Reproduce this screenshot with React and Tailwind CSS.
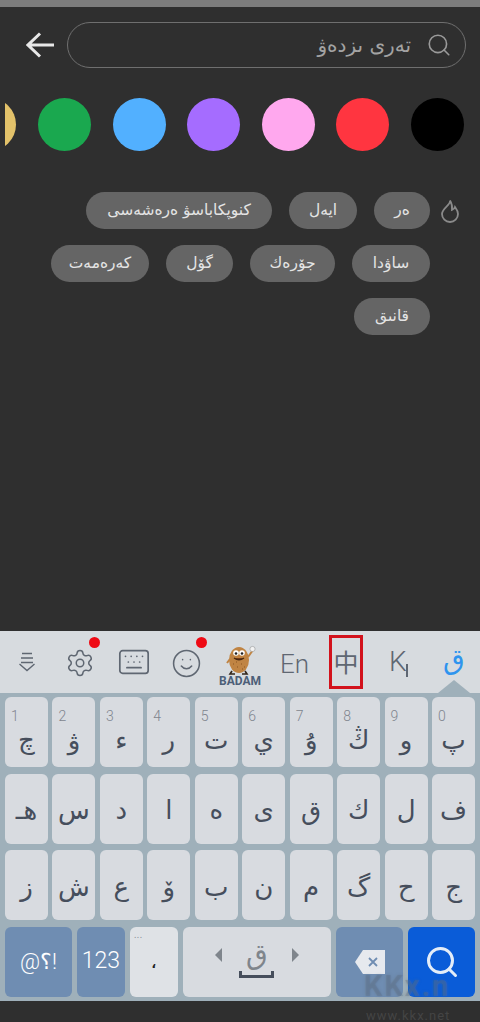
import { Search, Settings, Keyboard, Smile } from "lucide-react";

const arabic = { fontFamily: '"DejaVu Sans", "Noto Sans", sans-serif' };
const latin = { fontFamily: 'Roboto, "Liberation Sans", sans-serif' };

const colors = ["bg-[#e3c26a]", "bg-[#1aa84f]", "bg-[#52b0ff]", "bg-[#a56cff]", "bg-[#ffa8ee]", "bg-[#ff3540]", "bg-black"];

const tagRows = [
  [["كنوپكاباسۋ ەرەشەسى", "w-[186px]"], ["ايەل", "w-[68px]"], ["ەر", "w-[56px]"]],
  [["كەرەمەت", "w-[98px]"], ["گۆل", "w-[67px]"], ["جۆرەك", "w-[85px]"], ["ساۋدا", "w-[78px]"]],
  [["قانىق", "w-[76px]"]],
];

const row1 = [["1", "چ"], ["2", "ۋ"], ["3", "ء"], ["4", "ر"], ["5", "ت"], ["6", "ي"], ["7", "ۇ"], ["8", "ڭ"], ["9", "و"], ["0", "پ"]];
const row2 = ["ھـ", "س", "د", "ا", "ە", "ى", "ق", "ك", "ل", "ف"];
const row3 = ["ز", "ش", "ع", "ۆ", "ب", "ن", "م", "گ", "ح", "ج"];

const Key = ({ num, label }) => (
  <div className="relative h-[70px] rounded-md bg-[#d8dbe0] flex items-center justify-center text-[#464e5c] text-[26px]" style={arabic}>
    {num && <span className="absolute left-[6px] top-[9px] text-[14px] font-light text-[#7f858e]" style={latin}>{num}</span>}
    <span className={num ? "pt-[16px]" : "pt-[4px]"}>{label}</span>
  </div>
);

const HideIcon = () => (
  <svg width="18" height="20" viewBox="0 0 18 20" fill="none" stroke="#5f6772" strokeWidth="1.4">
    <path d="M4 1.5h10M3 6h12M3 10.5h12" />
    <path d="M1.5 12l7.5 6.5 7.5-6.5" />
  </svg>
);

const Badam = () => (
  <div className="flex flex-col items-center w-[44px]">
    <svg width="32" height="31" viewBox="0 0 32 31">
      <ellipse cx="15" cy="16" rx="10" ry="13" fill="#c08443" />
      <path d="M8 27l-2 3h5M21 27l2 3h-5" stroke="#33261a" strokeWidth="1.6" fill="none" />
      <path d="M24 13l5-7" stroke="#c08443" strokeWidth="2" />
      <path d="M6 15l-3 4" stroke="#c08443" strokeWidth="2" />
      <circle cx="28.5" cy="5" r="2.6" fill="#f2f2f2" stroke="#888" strokeWidth="0.5" />
      <circle cx="12" cy="9" r="2.8" fill="#fff" />
      <circle cx="18" cy="9" r="2.8" fill="#fff" />
      <circle cx="12" cy="9.5" r="1.3" fill="#222" />
      <circle cx="18" cy="9.5" r="1.3" fill="#222" />
      <path d="M10 14q5 3.5 10 0" stroke="#4a2a12" strokeWidth="1.4" fill="#7a3b16" />
      <path d="M9 20h1M13 23h1M17 20h1M20 23h1M12 18h1M18 25h1" stroke="#8a5523" strokeWidth="1.2" />
    </svg>
    <span className="text-[12px] font-bold leading-[12px] text-[#4d5f78]" style={latin}>BADAM</span>
  </div>
);

export default function App() {
  return (
    <div className="relative w-[480px] h-[1022px] overflow-hidden bg-[#2f2f2f] flex flex-col">
      <div className="h-[7px] bg-[#7d7d7d]" />

      {/* search */}
      <div className="flex items-center h-[46px] mt-[15px] pl-[26px] pr-[14px] gap-[13px]">
        <svg width="28" height="26" viewBox="0 0 28 26" fill="none" stroke="#e8e8e8" strokeWidth="3" className="shrink-0">
          <path d="M2 13h26M14 1.5L2 13l12 11.5" />
        </svg>
        <div className="flex-1 h-full rounded-full border border-[#6f6f6f] flex items-center justify-end pr-[13px] gap-[15px]">
          <span className="text-[20px] text-[#a3a3a3]" style={arabic} dir="rtl">تەرى ىزدەۋ</span>
          <Search size={26} className="text-[#9a9a9a]" strokeWidth={1.5} />
        </div>
      </div>

      {/* colours */}
      <div className="flex justify-end gap-[21.6px] mt-[30px] ml-[5px] pr-[16px] overflow-hidden">
        {colors.map((c) => (
          <div key={c} className={`w-[53px] h-[53px] rounded-full shrink-0 ${c}`} />
        ))}
      </div>

      {/* hot tags */}
      <div className="flex justify-end mt-[41px] pr-[20px] gap-[10px]">
        <div className="flex flex-col items-end gap-[16px]">
          {tagRows.map((row, i) => (
            <div key={i} className="flex gap-[17px]">
              {row.map(([text, w]) => (
                <div key={text} className={`h-[37px] rounded-full bg-[#656565] text-[#e4e4e4] text-[15.5px] flex items-center justify-center ${w}`} style={arabic} dir="rtl">
                  {text}
                </div>
              ))}
            </div>
          ))}
        </div>
        <svg width="20" height="24" viewBox="0 0 20 24" fill="none" stroke="#8a8a8a" strokeWidth="1.8" className="mt-[7px]">
          <path d="M10 1.5c1 4.5-8 7.500-8 13.500a8 8 0 0 0 16 0c0-3-1.500-5-3-7c-.5 1.500-1.500 2.500-3 3c.5-3.500-.2-6.500-2-9.500z" />
        </svg>
      </div>

      {/* keyboard */}
      <div className="mt-auto mb-[21px]">
        <div className="relative h-[62px] bg-[#d7dbdf] flex items-center">
          <div className="absolute left-[18px] top-[21px]"><HideIcon /></div>
          <div className="absolute left-[65px] top-[17px]"><Settings size={30} className="text-[#5f6772]" strokeWidth={1.2} /></div>
          <span className="absolute left-[89px] top-[6px] w-[11px] h-[11px] rounded-full bg-[#ee0a14]" />
          <div className="absolute left-[117px] top-[14px]"><Keyboard size={34} className="text-[#5f6772]" strokeWidth={1.2} /></div>
          <div className="absolute left-[171px] top-[17px]"><Smile size={31} className="text-[#5f6772]" strokeWidth={1.2} /></div>
          <span className="absolute left-[196px] top-[6px] w-[11px] h-[11px] rounded-full bg-[#ee0a14]" />
          <div className="absolute left-[218px] top-[13px]"><Badam /></div>
          <span className="absolute left-[280px] top-[18px] text-[26px] font-light leading-[30px] text-[#5f6772]" style={latin}>En</span>
          <div className="absolute left-[329px] top-[4px] w-[34px] h-[54px] border-[3px] border-[#d2121c] flex items-center justify-center text-[25px] text-[#5f6772]" style={{ fontFamily: '"Noto Sans CJK SC", sans-serif' }}>中</div>
          <span className="absolute left-[389px] top-[16px] text-[28px] font-light leading-[30px] text-[#5f6772]" style={latin}>K</span>
          <span className="absolute left-[406px] top-[33px] w-[2px] h-[13px] bg-[#5f6772]" />
          <span className="absolute left-[443px] top-[8px] text-[28px] text-[#2f94ee]" style={arabic}>ق</span>
          <div className="absolute right-[10px] bottom-0 w-0 h-0 border-x-[16px] border-x-transparent border-b-[13px] border-b-[#9fb0ba]" />
        </div>

        <div className="bg-[#9fb0ba] h-[308px] px-[5px] pt-[4px] flex flex-col gap-[6.5px]">
          <div className="grid grid-cols-10 gap-[4.5px]">
            {row1.map(([n, l]) => <Key key={n} num={n} label={l} />)}
          </div>
          <div className="grid grid-cols-10 gap-[4.5px]">
            {row2.map((l) => <Key key={l} label={l} />)}
          </div>
          <div className="grid grid-cols-10 gap-[4.5px]">
            {row3.map((l) => <Key key={l} label={l} />)}
          </div>

          <div className="flex h-[70px] gap-[5px]">
            <div className="w-[67px] rounded-md bg-[#6f8db2] text-white text-[22px] font-light flex items-center justify-center" style={latin}>{"@\u200E؟\u200E!"}</div>
            <div className="w-[48px] rounded-md bg-[#6f8db2] text-white text-[23px] font-light flex items-center justify-center" style={latin}>123</div>
            <div className="relative w-[48px] rounded-md bg-[#dfe2e6] flex items-center justify-center text-[#222] text-[12px] font-bold" style={arabic}>
              <span className="absolute left-[4px] top-[2px] text-[9px] font-normal text-[#8b9098]">...</span>
              <span className="pt-[4px]">،</span>
            </div>
            <div className="w-[149px] rounded-md bg-[#d8dbe0] flex flex-col items-center pt-[12px]">
              <div className="flex items-center gap-[24px]">
                <div className="w-0 h-0 border-y-[7px] border-y-transparent border-r-[7px] border-r-[#7f858c]" />
                <span className="text-[28px] leading-[32px] text-[#7f858c]" style={arabic}>ق</span>
                <div className="w-0 h-0 border-y-[7px] border-y-transparent border-l-[7px] border-l-[#7f858c]" />
              </div>
              <div className="w-[35px] h-[7px] border-x-[3px] border-b-[3px] border-[#464e5c]" />
            </div>
            <div className="w-[67px] rounded-md bg-[#6f8db2] flex items-center justify-center">
              <svg width="32" height="26" viewBox="0 0 32 26">
                <path d="M9 1h22v24H9L1 13z" fill="#e6e9ee" />
                <path d="M15 9l8 8M23 9l-8 8" stroke="#6f8db2" strokeWidth="1.8" />
              </svg>
            </div>
            <div className="w-[67px] rounded-md bg-[#0a5cd8] flex items-center justify-center">
              <Search size={36} className="text-[#e4edf8]" strokeWidth={2} />
            </div>
          </div>
        </div>
      </div>

      {/* site watermark */}
      <div className="absolute left-[364px] top-[970px] text-[29px] font-bold tracking-[2px] leading-[32px] text-[#5a6b80]/30 [text-shadow:0_0_3px_rgba(90,107,128,0.4)]" style={latin}>KKx.n</div>
      <div className="absolute left-[366px] top-[1006px] text-[13px] tracking-[1px] text-[#444444]" style={latin}>www.kkx.net</div>
    </div>
  );
}
